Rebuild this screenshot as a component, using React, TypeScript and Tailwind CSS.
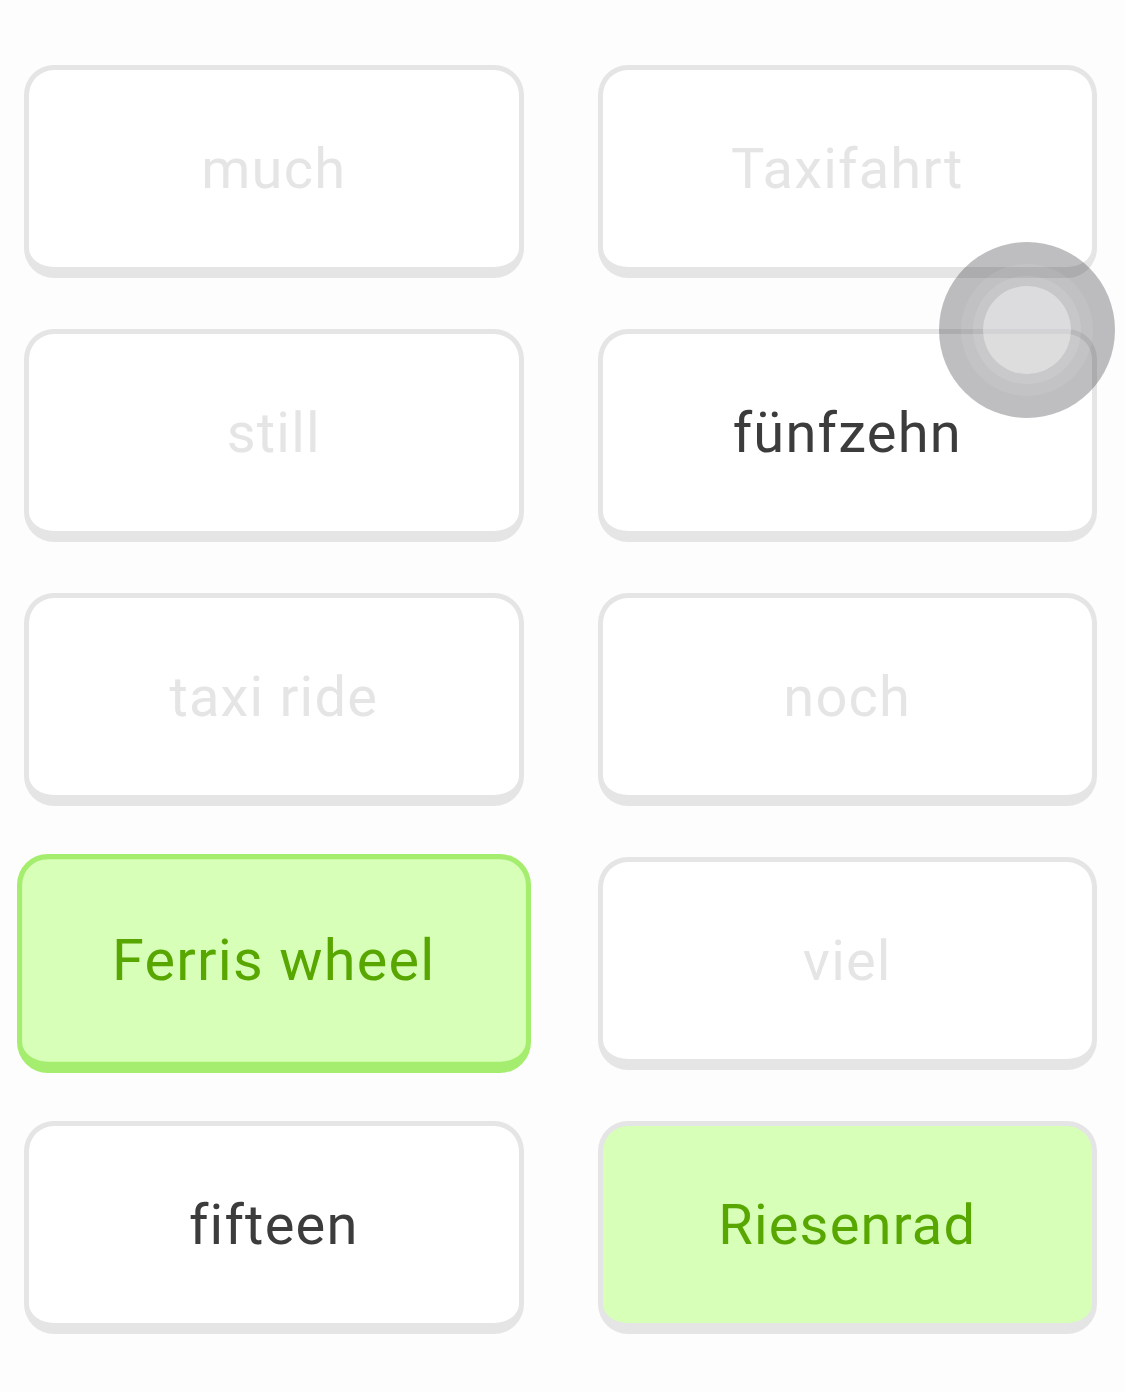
type Tile = {
  label: string;
  state: 'faded' | 'idle' | 'picked' | 'matched';
};

const tiles: Tile[] = [
  { label: 'much', state: 'faded' },
  { label: 'Taxifahrt', state: 'faded' },
  { label: 'still', state: 'faded' },
  { label: 'fünfzehn', state: 'idle' },
  { label: 'taxi ride', state: 'faded' },
  { label: 'noch', state: 'faded' },
  { label: 'Ferris wheel', state: 'picked' },
  { label: 'viel', state: 'faded' },
  { label: 'fifteen', state: 'idle' },
  { label: 'Riesenrad', state: 'matched' },
];

function TileButton({ tile }: { tile: Tile }) {
  const base =
    'flex h-[213px] items-center justify-center rounded-[30px] border-[5px] border-b-[11px] text-[56px] tracking-[1.2px]';

  if (tile.state === 'picked') {
    return (
      <button
        className={`${base} scale-[1.028] border-[#a5ed6e] bg-[#d7ffb8] text-[#58a700]`}
      >
        {tile.label}
      </button>
    );
  }
  if (tile.state === 'matched') {
    return (
      <button className={`${base} border-[#e5e5e5] bg-[#d7ffb8] text-[#58a700]`}>
        {tile.label}
      </button>
    );
  }
  return (
    <button
      className={`${base} border-[#e5e5e5] bg-white ${
        tile.state === 'faded' ? 'text-[#e5e5e5]' : 'text-[#3c3c3c]'
      }`}
    >
      {tile.label}
    </button>
  );
}

// finger-tap marker from the screen recording
function TapMarker() {
  return (
    <div className="pointer-events-none absolute left-[939px] top-[242px] flex h-[176px] w-[176px] items-center justify-center rounded-full bg-[rgba(40,36,48,0.3)]">
      <div className="flex h-[132px] w-[132px] items-center justify-center rounded-full bg-[rgba(255,255,255,0.08)]">
        <div className="flex h-[108px] w-[108px] items-center justify-center rounded-full bg-[rgba(255,255,255,0.1)]">
          <div className="h-[88px] w-[88px] rounded-full bg-[rgba(255,255,255,0.38)]" />
        </div>
      </div>
    </div>
  );
}

export default function App() {
  return (
    <div
      className="relative min-h-[1392px] w-[1125px] bg-[#fdfdfd] pl-[24px] pr-[28px] pt-[65px]"
      style={{ fontFamily: 'Roboto, "Liberation Sans", sans-serif' }}
    >
      <div className="grid grid-cols-2 gap-x-[74px] gap-y-[51px]">
        {tiles.map((t) => (
          <TileButton key={t.label} tile={t} />
        ))}
      </div>
      <TapMarker />
    </div>
  );
}
